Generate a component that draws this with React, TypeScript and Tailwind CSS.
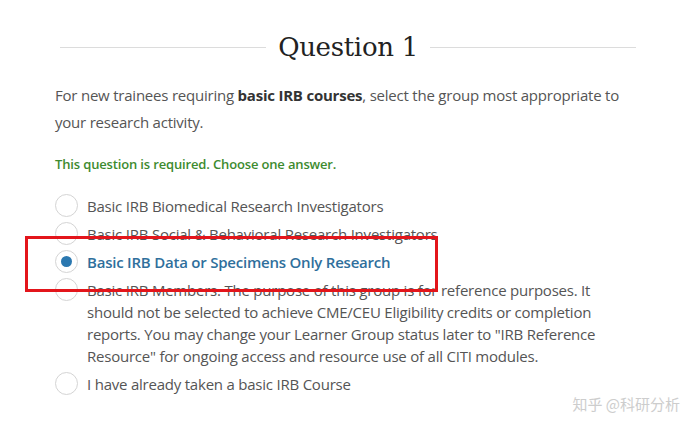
import React from 'react';

const options = [
  { label: 'Basic IRB Biomedical Research Investigators' },
  { label: 'Basic IRB Social & Behavioral Research Investigators' },
  { label: 'Basic IRB Data or Specimens Only Research', selected: true },
  {
    label:
      'Basic IRB Members. The purpose of this group is for reference purposes. It should not be selected to achieve CME/CEU Eligibility credits or completion reports. You may change your Learner Group status later to "IRB Reference Resource" for ongoing access and resource use of all CITI modules.',
  },
  { label: 'I have already taken a basic IRB Course' },
];

const Radio: React.FC<{ selected?: boolean }> = ({ selected }) => (
  <span className="mt-[-1px] w-[23px] h-[23px] shrink-0 rounded-full border border-[#d4d4d4] bg-white flex items-center justify-center">
    {selected && <span className="w-[11px] h-[11px] rounded-full bg-[#2b78b0]" />}
  </span>
);

export default function App() {
  return (
    <div className="relative w-[691px] h-[434px] bg-white overflow-hidden" style={{ fontFamily: '"Open Sans", sans-serif' }}>
      <div className="px-[55px] pt-[28px] w-[691px]">
        {/* Heading */}
        <div className="flex items-center gap-3 pl-[5px]">
          <div className="flex-1 h-px bg-[#dcdcdc]" />
          <h1 className="text-[26px] leading-[38px] text-[#222] tracking-[-0.3px]" style={{ fontFamily: '"DejaVu Serif", serif' }}>
            Question 1
          </h1>
          <div className="flex-1 h-px bg-[#dcdcdc]" />
        </div>

        <p className="mt-[16px] text-[15px] leading-[27px] text-[#555] tracking-[-0.22px] pr-[5px]">
          For new trainees requiring <b className="font-bold text-[#333]">basic IRB courses</b>, select the group most appropriate to your research activity.
        </p>

        <p className="mt-[19px] text-[13px] leading-[18px] font-semibold text-[#3d8b2f] tracking-[-0.15px]">
          This question is required. Choose one answer.
        </p>

        <div className="mt-[22px] flex flex-col gap-[6px]">
          {options.map((o, i) => (
            <div key={i} className="flex items-start gap-[9px]">
              <Radio selected={o.selected} />
              <span
                className={`text-[15px] leading-[22px] tracking-[-0.22px] pr-[30px] ${o.selected ? 'font-semibold text-[#2f6f9c]' : 'text-[#555]'}`}
              >
                {o.label}
              </span>
            </div>
          ))}
        </div>
      </div>

      {/* red highlight box */}
      <div className="absolute left-[25px] top-[236px] w-[413px] h-[56px] border-[3px] border-[#e3151b]" />

      {/* watermark */}
      <div
        className="absolute right-[11px] bottom-[20px] text-[15px] leading-[20px] text-[#cdcdcd]"
        style={{ fontFamily: '"Noto Sans CJK SC", sans-serif' }}
      >
        知乎 @科研分析
      </div>
    </div>
  );
}
